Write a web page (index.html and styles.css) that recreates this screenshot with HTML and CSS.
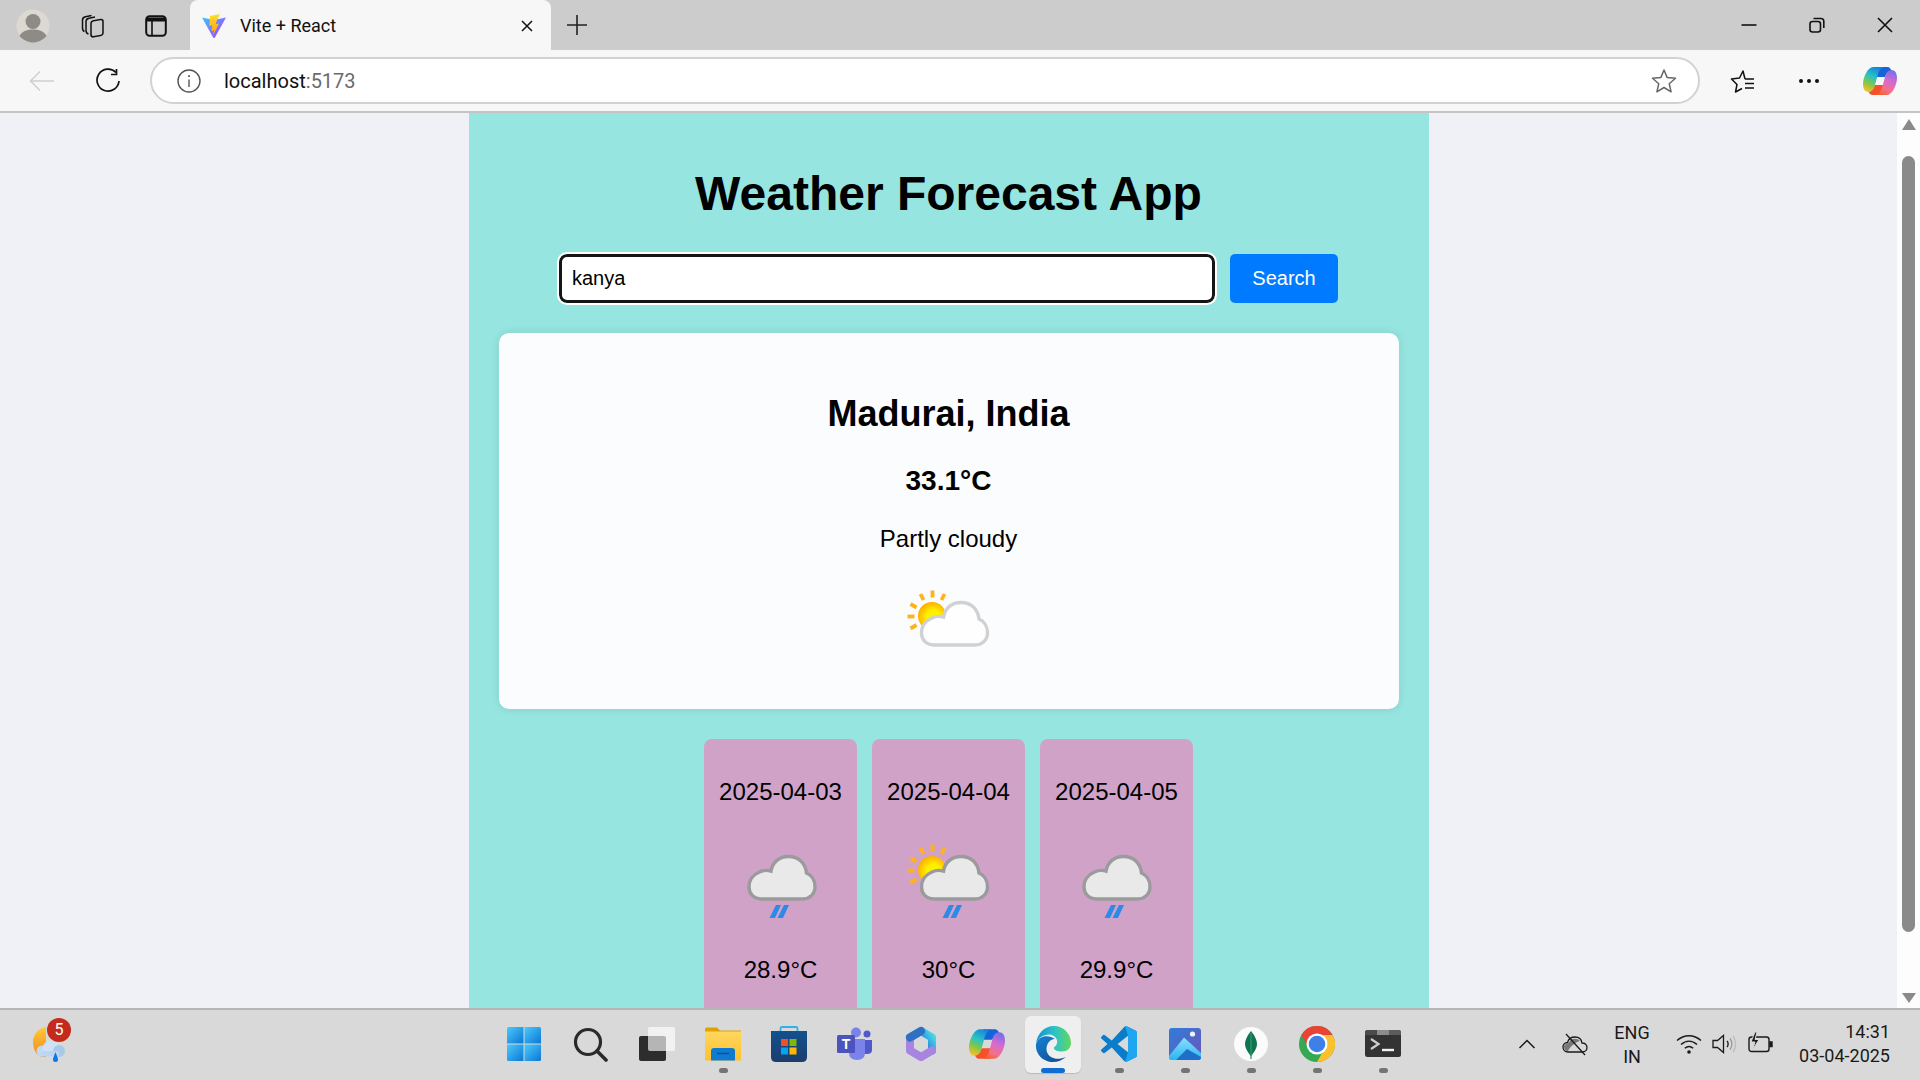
FILE: index.html
```html
<!DOCTYPE html>
<html lang="en">
<head>
    <meta charset="UTF-8">
    <meta name="viewport" content="width=device-width, initial-scale=1.0">
    <title>Vite + React</title>
    <link rel="stylesheet" href="styles.css">
</head>
<body>
    <svg class="svg-defs" aria-hidden="true">
        <defs>
            <radialGradient id="sunFill" cx="0.55" cy="0.55" r="0.55">
                <stop offset="0.45" stop-color="#fff000"/>
                <stop offset="1" stop-color="#ffb000"/>
            </radialGradient>
            <symbol id="sunRays" viewBox="0 0 100 100">
                <circle cx="33" cy="40" r="14" fill="url(#sunFill)"/>
                <g stroke="#ffb21a" stroke-width="3.800" fill="none">
                    <path d="M33.500 14.500V21.500"/>
                    <path d="M21.500 18L24.500 24"/>
                    <path d="M45.500 18L42.500 24"/>
                    <path d="M11.500 28L17.500 31.500"/>
                    <path d="M8.500 40.500H15.500"/>
                    <path d="M11.500 52.500L17.500 49"/>
                </g>
            </symbol>
            <symbol id="cloudShape" viewBox="0 0 100 100">
                <path d="M35 69C27 69 22.500 63.500 22.500 57C22.500 50 27 44.500 33 42C37 40 41 40 44.500 41C46 32 53 26.500 62 26.500C72 26.500 79 33 80 43C85 45 88.500 50.500 88.500 57C88.500 64 83 69 76 69Z" stroke-width="3.400"/>
            </symbol>
            <symbol id="rainDrops" viewBox="0 0 100 100">
                <path d="M45 75H50L44 88H38.500Z" fill="#2b8be6"/>
                <path d="M53 75H58L52 88H46.500Z" fill="#2b8be6"/>
            </symbol>
            <linearGradient id="viteBody" x1="0" y1="0" x2="1" y2="1">
                <stop offset="0" stop-color="#35c8ff"/>
                <stop offset="1" stop-color="#b82cff"/>
            </linearGradient>
            <linearGradient id="viteBolt" x1="0" y1="0" x2="0" y2="1">
                <stop offset="0" stop-color="#ffdd35"/>
                <stop offset="1" stop-color="#ff9d00"/>
            </linearGradient>
            <linearGradient id="copilotLeft" x1="0.6" y1="0" x2="0.2" y2="1">
                <stop offset="0" stop-color="#1684e0"/>
                <stop offset="0.4" stop-color="#2bc4c0"/>
                <stop offset="0.7" stop-color="#8cc63f"/>
                <stop offset="1" stop-color="#fbc02d"/>
            </linearGradient>
            <linearGradient id="copilotRight" x1="0.7" y1="0" x2="0.3" y2="1">
                <stop offset="0" stop-color="#7a6ee8"/>
                <stop offset="0.4" stop-color="#d66ad0"/>
                <stop offset="0.75" stop-color="#f4708a"/>
                <stop offset="1" stop-color="#f5602f"/>
            </linearGradient>
            <symbol id="copilotMark" viewBox="0 0 34 34">
                <path d="M14 3H24C27 3 28 5 29 8L30 12C28 9 26 8 24 9L22 13H14Z" fill="#1565d8"/>
                <path d="M20 31H10C7 31 6 29 5 26L4 22C6 25 8 26 10 25L12 21H20Z" fill="#f5502b"/>
                <path d="M10 3C5 3 0 13 0 20C0 25 2 28 5.500 28C9 28 11 25 12 21L15 10C16 7 18 3 22 3Z" fill="url(#copilotLeft)"/>
                <path d="M24 31C29 31 34 21 34 14C34 9 32 6 28.500 6C25 6 23 9 22 13L19 24C18 27 16 31 12 31Z" fill="url(#copilotRight)"/>
            </symbol>
            <linearGradient id="winFill" x1="0" y1="0" x2="1" y2="1">
                <stop offset="0" stop-color="#4cc8fb"/>
                <stop offset="1" stop-color="#0a78d6"/>
            </linearGradient>
            <linearGradient id="folderFill" x1="0" y1="0" x2="0" y2="1">
                <stop offset="0" stop-color="#ffd75e"/>
                <stop offset="1" stop-color="#fcc02e"/>
            </linearGradient>
            <linearGradient id="edgeTop" x1="0" y1="0.5" x2="1" y2="0.5">
                <stop offset="0" stop-color="#1191d3"/>
                <stop offset="0.55" stop-color="#2fc3c4"/>
                <stop offset="1" stop-color="#62d75f"/>
            </linearGradient>
            <linearGradient id="edgeBody" x1="0" y1="0" x2="0.8" y2="1">
                <stop offset="0" stop-color="#1583d4"/>
                <stop offset="1" stop-color="#0f4f95"/>
            </linearGradient>
            <linearGradient id="photosFill" x1="0" y1="0" x2="1" y2="1">
                <stop offset="0" stop-color="#2f7ddb"/>
                <stop offset="1" stop-color="#6d55b8"/>
            </linearGradient>
            <linearGradient id="photosHill" x1="0" y1="0" x2="0" y2="1">
                <stop offset="0" stop-color="#8fdcff"/>
                <stop offset="1" stop-color="#29b6f0"/>
            </linearGradient>
            <linearGradient id="m365Top" x1="0" y1="0.8" x2="1" y2="0.2">
                <stop offset="0" stop-color="#1f62b8"/>
                <stop offset="0.6" stop-color="#2f8fdc"/>
                <stop offset="1" stop-color="#45d3e8"/>
            </linearGradient>
            <linearGradient id="storeFill" x1="0" y1="0" x2="0" y2="1">
                <stop offset="0" stop-color="#13508f"/>
                <stop offset="1" stop-color="#1c3d6e"/>
            </linearGradient>
            <linearGradient id="weatherSun" x1="0" y1="0" x2="0" y2="1">
                <stop offset="0" stop-color="#ffc93a"/>
                <stop offset="1" stop-color="#f08a1d"/>
            </linearGradient>
        </defs>
    </svg>

    <div class="screen">
        <div class="tabstrip">
            <div class="strip-btn profile-btn">
                <svg class="icon-34" viewBox="0 0 34 34">
                    <circle cx="17" cy="17" r="16.500" fill="#dcd9d3"/>
                    <circle cx="17" cy="12.500" r="7.500" fill="#8e8a85"/>
                    <path d="M3.500 27C6 22 11 20.500 17 20.500S28 22 30.500 27C27 31 22 33.500 17 33.500S7 31 3.500 27Z" fill="#8e8a85"/>
                </svg>
            </div>
            <div class="strip-btn collections-btn">
                <svg class="icon-24" viewBox="0 0 24 24" fill="none" stroke="#111" stroke-width="1.500">
                    <rect x="10" y="7" width="12" height="16" rx="2.500" transform="skewY(-10) translate(0 2)"/>
                    <path d="M7.500 20C5.500 19.500 5 18 5 16.500V7.500C5 5.500 6.500 4.500 8 4.200L14 3"/>
                    <path d="M3.500 17.500C2 17 1.500 15.500 1.500 14V6C1.500 4 3 3 4.500 2.700L10.500 1.500"/>
                </svg>
            </div>
            <div class="strip-btn actions-btn">
                <svg class="icon-22" viewBox="0 0 22 22" fill="none" stroke="#111">
                    <rect x="1.200" y="1.200" width="19.600" height="19.600" rx="3.500" stroke-width="2"/>
                    <path d="M1.500 2.500H20.500V6.500H1.500Z" fill="#111" stroke="none"/>
                    <path d="M7 6V20" stroke-width="1.600"/>
                </svg>
            </div>
            <div class="tab">
                <svg class="icon-24" viewBox="0 0 24 24">
                    <path d="M0 3.500L11.800 6L24 3.500L13 23.300Q12 24.800 11 23.300Z" fill="url(#viteBody)"/>
                    <path d="M18 0L8 2L7.300 12L10.300 11.300L9.300 17L12 16.200L10.800 22L17 9.500L13.600 10.300L15 6Z" fill="url(#viteBolt)"/>
                </svg>
                <span class="tab-title">Vite + React</span>
                <svg class="tab-close icon-12" viewBox="0 0 12 12" fill="none" stroke="#111" stroke-width="1.500">
                    <path d="M1 1L11 11M11 1L1 11"/>
                </svg>
            </div>
            <div class="strip-btn new-tab-btn">
                <svg class="icon-20" viewBox="0 0 20 20" fill="none" stroke="#222" stroke-width="1.600">
                    <path d="M10 0V20M0 10H20"/>
                </svg>
            </div>
            <div class="window-controls">
                <div class="window-btn">
                    <svg class="icon-16" viewBox="0 0 16 16" fill="none" stroke="#111" stroke-width="1.600">
                        <path d="M0.500 8H15.500"/>
                    </svg>
                </div>
                <div class="window-btn">
                    <svg class="icon-16" viewBox="0 0 16 16" fill="none" stroke="#111" stroke-width="1.600">
                        <rect x="1" y="4.500" width="10.500" height="10.500" rx="2.500"/>
                        <path d="M4.500 1.500H12C13.500 1.500 14.800 2.800 14.800 4.300V11"/>
                    </svg>
                </div>
                <div class="window-btn">
                    <svg class="icon-16" viewBox="0 0 16 16" fill="none" stroke="#111" stroke-width="1.600">
                        <path d="M1 1L15 15M15 1L1 15"/>
                    </svg>
                </div>
            </div>
        </div>

        <div class="toolbar">
            <div class="nav-btn back-btn">
                <svg class="icon-26" viewBox="0 0 26 26" fill="none" stroke="#cfcfcf" stroke-width="1.500">
                    <path d="M25 13H1.500M11 3.500L1.500 13L11 22.500"/>
                </svg>
            </div>
            <div class="nav-btn reload-btn">
                <svg class="icon-26" viewBox="0 0 26 26" fill="none" stroke="#111" stroke-width="1.700">
                    <path d="M21 4.500A11 11 0 1 0 24 13"/>
                    <path d="M21.500 1V6.500H16"/>
                </svg>
            </div>
            <div class="address-bar">
                <svg class="icon-24" viewBox="0 0 24 24" fill="none" stroke="#555" stroke-width="1.400">
                    <circle cx="12" cy="12" r="11"/>
                    <path d="M12 10.500V18"/>
                    <path d="M12 6.300V8" stroke-width="1.800"/>
                </svg>
                <span class="address-text">localhost<span class="address-port">:5173</span></span>
                <svg class="address-star icon-26" viewBox="0 0 26 26" fill="none" stroke="#666" stroke-width="1.500" stroke-linejoin="round">
                    <path d="M13 2L16.200 9.600L24.500 10.300L18.200 15.700L20.100 23.800L13 19.500L5.900 23.800L7.800 15.700L1.500 10.300L9.800 9.600Z"/>
                </svg>
            </div>
            <div class="nav-btn favorites-btn">
                <svg class="icon-26" viewBox="0 0 26 26" fill="none" stroke="#111" stroke-width="1.500" stroke-linejoin="round">
                    <path d="M15 11L13 3L9.500 10L1.500 11L7 16.500L5.500 24L12 20.500"/>
                    <path d="M15 11H24M15 15.500H24M15 20H24" stroke-width="1.300"/>
                </svg>
            </div>
            <div class="nav-btn more-btn">
                <span class="dot"></span><span class="dot"></span><span class="dot"></span>
            </div>
            <div class="nav-btn copilot-btn">
                <svg class="icon-34"><use href="#copilotMark"/></svg>
            </div>
        </div>

        <div class="viewport">
            <div class="page">
                <div class="app">
                    <h1 class="app-title">Weather Forecast App</h1>
                    <div class="search-row">
                        <input class="search-input" type="text" value="kanya">
                        <button class="search-btn">Search</button>
                    </div>
                    <div class="current-card">
                        <h2 class="city-name">Madurai, India</h2>
                        <p class="current-temp">33.1°C</p>
                        <p class="current-text">Partly cloudy</p>
                        <svg class="weather-icon" viewBox="0 0 100 100">
                            <use href="#sunRays"/>
                            <use class="cloud-light" href="#cloudShape"/>
                        </svg>
                    </div>
                    <div class="forecast-row">
                        <div class="forecast-card">
                            <p class="forecast-date">2025-04-03</p>
                            <svg class="weather-icon" viewBox="0 0 100 100">
                                <use class="cloud-dim" href="#cloudShape" x="-4.500"/>
                                <use href="#rainDrops"/>
                            </svg>
                            <p class="forecast-temp">28.9°C</p>
                        </div>
                        <div class="forecast-card">
                            <p class="forecast-date">2025-04-04</p>
                            <svg class="weather-icon" viewBox="0 0 100 100">
                                <use href="#sunRays"/>
                                <use class="cloud-dim" href="#cloudShape"/>
                                <use href="#rainDrops" x="5"/>
                            </svg>
                            <p class="forecast-temp">30°C</p>
                        </div>
                        <div class="forecast-card">
                            <p class="forecast-date">2025-04-05</p>
                            <svg class="weather-icon" viewBox="0 0 100 100">
                                <use class="cloud-dim" href="#cloudShape" x="-5.500"/>
                                <use href="#rainDrops" x="-1"/>
                            </svg>
                            <p class="forecast-temp">29.9°C</p>
                        </div>
                    </div>
                </div>
            </div>
            <div class="scrollbar">
                <span class="arrow-up"></span>
                <span class="scroll-thumb"></span>
                <span class="arrow-down"></span>
            </div>
        </div>

        <div class="taskbar">
            <div class="task-left">
                <div class="weather-widget">
                    <svg class="icon-36" viewBox="0 0 36 36">
                        <path d="M15 1A15 15 0 0 0 2 16C2 24 6 30 12 31H15Z" fill="url(#weatherSun)"/>
                        <circle cx="11" cy="25" r="5.500" fill="#c3d9f1"/>
                        <circle cx="20" cy="23" r="8.500" fill="#cfe1f5"/>
                        <circle cx="28" cy="25" r="6" fill="#a9c8ea"/>
                        <path d="M11 25H28V30.500H11Z" fill="#bcd5f0"/>
                        <path d="M24.500 26C26 30 27 32 27 33.500A2.500 2.500 0 0 1 22 33.500C22 32 23 30 24.500 26Z" fill="#0f78e8"/>
                    </svg>
                    <span class="weather-badge">5</span>
                </div>
            </div>
            <div class="task-icons">
                <div class="task-item task-item-first">
                    <div class="task-tile">
                        <svg class="icon-36" viewBox="0 0 36 36" fill="url(#winFill)">
                            <path d="M1 2.500Q1 1 2.500 1H17.500V17.500H1Z"/>
                            <path d="M18.500 1H33.500Q35 1 35 2.500V17.500H18.500Z"/>
                            <path d="M1 18.500H17.500V35H2.500Q1 35 1 33.500Z"/>
                            <path d="M18.500 18.500H35V33.500Q35 35 33.500 35H18.500Z"/>
                        </svg>
                    </div>
                </div>
                <div class="task-item">
                    <div class="task-tile">
                        <svg class="icon-36" viewBox="0 0 36 36" fill="none" stroke="#2a2a2a">
                            <circle cx="15" cy="16" r="12.500" stroke-width="3.200"/>
                            <path d="M24 25L33 34" stroke-width="3.600" stroke-linecap="round"/>
                        </svg>
                    </div>
                </div>
                <div class="task-item">
                    <div class="task-tile">
                        <svg class="icon-36" viewBox="0 0 36 36">
                            <rect x="0" y="10" width="27" height="25" rx="2" fill="#2d2d2d"/>
                            <rect x="9" y="1" width="27" height="24" rx="2" fill="#ffffff" fill-opacity="0.65"/>
                        </svg>
                    </div>
                </div>
                <div class="task-item">
                    <div class="task-tile">
                        <svg class="icon-36" viewBox="0 0 36 36">
                            <path d="M0 3Q0 1.500 1.500 1.500H12L15 4.500H36V10H0Z" fill="#dfa200"/>
                            <rect x="0" y="5.500" width="36" height="29" fill="url(#folderFill)"/>
                            <path d="M6 34.500V25Q6 22 9 22H27Q30 22 30 25V34.500Z" fill="#0f7bd0"/>
                            <path d="M12 27.500H24" stroke="#0a4f94" stroke-width="1.400"/>
                        </svg>
                        <span class="task-mark"></span>
                    </div>
                </div>
                <div class="task-item">
                    <div class="task-tile">
                        <svg class="icon-36" viewBox="0 0 36 36">
                            <path d="M9.500 7V2.500Q9.500 1 11 1H25Q26.500 1 26.500 2.500V7" fill="none" stroke="#2bb4ec" stroke-width="1.800"/>
                            <path d="M0 5H36V31Q36 36 31 36H5Q0 36 0 31Z" fill="url(#storeFill)"/>
                            <rect x="10" y="13" width="7" height="7" fill="#f25022"/>
                            <rect x="18.500" y="13" width="7" height="7" fill="#7fba00"/>
                            <rect x="10" y="21.500" width="7" height="7" fill="#00a4ef"/>
                            <rect x="18.500" y="21.500" width="7" height="7" fill="#ffb900"/>
                        </svg>
                    </div>
                </div>
                <div class="task-item">
                    <div class="task-tile">
                        <svg class="icon-36" viewBox="0 0 36 36">
                            <circle cx="19" cy="6.500" r="5" fill="#7b83eb"/>
                            <circle cx="30" cy="8" r="3.500" fill="#5059c9"/>
                            <path d="M26 14H35V24Q35 28 30 28H26Z" fill="#5059c9"/>
                            <path d="M12 13H28V27Q28 34 20 34Q12 34 12 27Z" fill="#7b83eb"/>
                            <rect x="0" y="9" width="18" height="18" rx="1.500" fill="#4b53bc"/>
                            <text class="teams-letter" x="9" y="23">T</text>
                        </svg>
                    </div>
                </div>
                <div class="task-item">
                    <div class="task-tile">
                        <svg class="icon-36" viewBox="0 0 36 36" fill="none" stroke-width="8" stroke-linejoin="round" stroke-linecap="round">
                            <path d="M7 11.500L18 5L29 11.500V24.500" stroke="url(#m365Top)"/>
                            <path d="M29 24.500L18 31L7 24.500V11.500" stroke="#a884e0"/>
                            <path d="M7 11.500L18 5" stroke="#2f6fc4"/>
                        </svg>
                    </div>
                </div>
                <div class="task-item">
                    <div class="task-tile">
                        <svg class="icon-36"><use href="#copilotMark"/></svg>
                    </div>
                </div>
                <div class="task-item">
                    <div class="task-tile task-tile-active">
                        <svg class="icon-36" viewBox="0 0 36 36">
                            <path d="M1 18C0 28 8 36 18 36C23 36 27 34 31 31C26 33 21 33.500 17 31.500C12 29 10.500 24 12 19.500C13.500 15 17 13 20 13C15 9 4 8 1 18Z" fill="url(#edgeBody)"/>
                            <path d="M1 18C2 8 9 0 19 0C29 0 36 8 36 17C36 22 32 25.500 27 25.500C22 25.500 19 24 19 22C19 21 20 20.500 21 19.500C22 18 22.500 16 22 14C21 11 18 8.500 14 8.500C8 8.500 3 12 1 18Z" fill="url(#edgeTop)"/>
                        </svg>
                        <span class="task-mark task-mark-active"></span>
                    </div>
                </div>
                <div class="task-item">
                    <div class="task-tile">
                        <svg class="icon-36" viewBox="0 0 100 100">
                            <path fill-rule="evenodd" d="M71 99L97 87Q100 85 100 81V19Q100 15 97 13L71 1Q68 0 65 2L30 40L10 25Q8 24 6 25L1 30Q-1 32 1 35L18 50L1 65Q-1 68 1 70L6 75Q8 76 10 75L30 60L65 98Q68 100 71 99ZM75 27L46 50L75 73Z" fill="#0b7cc9"/>
                            <path d="M71 99L97 87Q100 85 100 81V19Q100 15 97 13L71 1Q68 0 67 1L75 27V73L67 99Q68 100 71 99Z" fill="#1fa6f0"/>
                        </svg>
                        <span class="task-mark"></span>
                    </div>
                </div>
                <div class="task-item">
                    <div class="task-tile">
                        <svg class="icon-36" viewBox="0 0 36 36">
                            <rect x="2" y="2" width="32" height="32" rx="3" fill="url(#photosFill)"/>
                            <circle cx="25.500" cy="8" r="2.600" fill="#f3f3f8"/>
                            <path d="M2 31V30L17 11.500L34 27V31Q34 34 31 34H5Q2 34 2 31Z" fill="url(#photosHill)"/>
                            <path d="M9 34L20 23L34 31Q34 34 31 34Z" fill="#1f6fc9"/>
                        </svg>
                        <span class="task-mark"></span>
                    </div>
                </div>
                <div class="task-item">
                    <div class="task-tile">
                        <svg class="icon-36" viewBox="0 0 36 36">
                            <circle cx="18" cy="18" r="17" fill="#fbfbfb"/>
                            <path d="M18 5C22 10 24 14 24 18C24 23 20 27 18.500 30V33H17.500V30C16 27 12 23 12 18C12 14 14 10 18 5Z" fill="#0f7550"/>
                            <path d="M18 7V30" stroke="#4dab72" stroke-width="0.800"/>
                        </svg>
                        <span class="task-mark"></span>
                    </div>
                </div>
                <div class="task-item">
                    <div class="task-tile">
                        <svg class="icon-36" viewBox="0 0 36 36">
                            <circle cx="18" cy="18" r="18" fill="#34a853"/>
                            <path d="M18 9H33.590A18 18 0 0 0 2.410 9L10.200 22.500A9 9 0 0 1 18 9Z" fill="#ea4335"/>
                            <path d="M25.790 22.500L18 36A18 18 0 0 0 33.590 9H18A9 9 0 0 1 25.790 22.500Z" fill="#fbc02d"/>
                            <circle cx="18" cy="18" r="10.500" fill="#ffffff"/>
                            <circle cx="18" cy="18" r="8.300" fill="#3f7fe8"/>
                        </svg>
                        <span class="task-mark"></span>
                    </div>
                </div>
                <div class="task-item">
                    <div class="task-tile">
                        <svg class="icon-36" viewBox="0 0 36 36">
                            <rect x="0" y="4" width="36" height="27" rx="2.500" fill="#333333"/>
                            <path d="M0 6.500Q0 4 2.500 4H12V9H0Z" fill="#4a4a4a"/>
                            <rect x="12" y="4" width="12" height="5" fill="#8c8c8c"/>
                            <path d="M24 4H33.500Q36 4 36 6.500V9H24Z" fill="#5c5c5c"/>
                            <path d="M6 13L13.500 18L6 23" fill="none" stroke="#cfcfcf" stroke-width="2.200"/>
                            <path d="M17 24H29" stroke="#f2f2f2" stroke-width="2.400"/>
                        </svg>
                        <span class="task-mark"></span>
                    </div>
                </div>
            </div>
            <div class="tray">
                <div class="tray-item tray-chevron">
                    <svg class="icon-18" viewBox="0 0 18 18" fill="none" stroke="#1a1a1a" stroke-width="1.500">
                        <path d="M1.500 13L9 5.500L16.500 13"/>
                    </svg>
                </div>
                <div class="tray-item tray-cloud">
                    <svg class="icon-26" viewBox="0 0 26 26" stroke="#1a1a1a" stroke-width="1.300">
                        <path d="M6 21C3 21 1 19 1 16C1 13.500 3 11.500 5.500 11.500C6.500 8 9.500 6 13 6C17 6 19.500 8.500 20 12C23 12 25 14 25 16.500C25 19 23 21 20 21Z" fill="none"/>
                        <path d="M2 15C4 12 7 12 8 10C9.500 7.500 15 6.500 18 10C12 12 8 16 6 20C3 20 2 18 2 15Z" fill="#777" stroke="none"/>
                        <path d="M4 3L23 24" fill="none"/>
                    </svg>
                </div>
                <div class="tray-item tray-lang">
                    <span>ENG</span>
                    <span>IN</span>
                </div>
                <div class="tray-item tray-icon">
                    <svg class="icon-26" viewBox="0 0 26 26" fill="none" stroke="#1a1a1a" stroke-width="1.500">
                        <path d="M1 9.500C8 3 18 3 25 9.500"/>
                        <path d="M5 13.500C10 9 16 9 21 13.500"/>
                        <path d="M8.800 17.300C11.500 15 14.500 15 17.200 17.300"/>
                        <circle cx="13" cy="21" r="1.800" fill="#1a1a1a" stroke="none"/>
                    </svg>
                </div>
                <div class="tray-item tray-icon">
                    <svg class="icon-26" viewBox="0 0 26 26" fill="none" stroke="#1a1a1a" stroke-width="1.300">
                        <path d="M1 9.500H5.500L11.500 4.500V21.500L5.500 16.500H1Z"/>
                        <path d="M15 10C16.500 11.500 16.500 14.500 15 16"/>
                        <path d="M18 7.500C20.500 10.500 20.500 15.500 18 18.500" stroke="#9a9a9a"/>
                        <path d="M21 5C24.500 9.500 24.500 16.500 21 21" stroke="#bdbdbd"/>
                    </svg>
                </div>
                <div class="tray-item tray-icon">
                    <svg class="icon-26" viewBox="0 0 26 26" fill="none" stroke="#1a1a1a" stroke-width="1.400">
                        <rect x="1" y="6" width="20" height="14.500" rx="2.500"/>
                        <path d="M22 11H24V15.500H22Z" fill="#1a1a1a"/>
                        <path d="M7 1L3 11H7L4.500 19L11 8.500H7L9 1Z" fill="#1a1a1a" stroke="#d9d9d9" stroke-width="1"/>
                    </svg>
                </div>
                <div class="tray-clock">
                    <span>14:31</span>
                    <span>03-04-2025</span>
                </div>
            </div>
        </div>
    </div>
</body>
</html>
```

FILE: styles.css
```css
* {
    box-sizing: border-box;
}

body {
    margin: 0;
    font-family: "Liberation Sans", Arial, sans-serif;
    color: #000;
}

.svg-defs {
    position: absolute;
    width: 0;
    height: 0;
}

.icon-12 { width: 12px; height: 12px; }
.icon-16 { width: 16px; height: 16px; }
.icon-18 { width: 18px; height: 18px; }
.icon-20 { width: 20px; height: 20px; }
.icon-22 { width: 22px; height: 22px; }
.icon-24 { width: 24px; height: 24px; }
.icon-26 { width: 26px; height: 26px; }
.icon-34 { width: 34px; height: 34px; }
.icon-36 { width: 36px; height: 36px; }

.screen {
    display: flex;
    flex-direction: column;
    width: 1920px;
    height: 1080px;
    overflow: hidden;
}

/* browser tab strip */
.tabstrip {
    display: flex;
    align-items: center;
    flex: none;
    height: 50px;
    background-color: #cccccc;
}

.strip-btn {
    display: flex;
    align-items: center;
    justify-content: center;
    height: 50px;
    padding-top: 2px;
}

.profile-btn { width: 66px; }
.collections-btn { width: 54px; }
.actions-btn { width: 72px; margin-right: -2px; }
.new-tab-btn { width: 52px; padding-top: 0; }

.tab {
    display: flex;
    align-items: center;
    width: 361px;
    height: 50px;
    padding: 1px 18px 0 12px;
    background-color: #f7f7f7;
    border-radius: 8px 8px 0 0;
}

.tab-title {
    margin-left: 14px;
    font-family: Roboto, sans-serif;
    font-size: 18px;
    color: #111;
}

.tab-close {
    margin-left: auto;
}

.window-controls {
    display: flex;
    margin-left: auto;
    padding-right: 1px;
}

.window-btn {
    display: flex;
    align-items: center;
    justify-content: center;
    width: 68px;
    height: 50px;
}

/* address bar row */
.toolbar {
    display: flex;
    align-items: center;
    flex: none;
    height: 63px;
    padding-left: 8px;
    background-color: #f7f7f7;
    border-bottom: 2px solid #c4c4c4;
}

.nav-btn {
    display: flex;
    align-items: center;
    justify-content: center;
    width: 66px;
    height: 47px;
}

.back-btn { width: 67px; }
.favorites-btn { margin-left: 10px; }
.copilot-btn { width: 76px; }

.more-btn {
    gap: 4px;
}

.dot {
    width: 4px;
    height: 4px;
    background-color: #111;
    border-radius: 50%;
}

.address-bar {
    display: flex;
    align-items: center;
    width: 1550px;
    height: 47px;
    margin-left: 9px;
    padding: 0 21px 0 25px;
    background-color: #fff;
    border: 2px solid #d2d2d2;
    border-radius: 24px;
}

.address-text {
    margin-left: 23px;
    font-family: Roboto, sans-serif;
    font-size: 20px;
    color: #111;
}

.address-port {
    color: #6b6b6b;
}

.address-star {
    margin-left: auto;
}

/* page area */
.viewport {
    display: flex;
    flex: 1;
    min-height: 0;
}

.page {
    flex: 1;
    overflow: hidden;
    background-color: #f0f1f6;
}

.app {
    width: 960px;
    height: 1000px;
    margin: 0 auto;
    padding: 20px 30px;
    background-color: #96e5e0;
}

.app-title {
    margin: 33px 0;
    font-size: 48px;
    line-height: 55px;
    text-align: center;
}

.search-row {
    display: flex;
    justify-content: center;
    gap: 15px;
    margin-bottom: 30px;
}

.search-input {
    width: 656px;
    height: 49px;
    padding: 0 10px;
    font-family: inherit;
    font-size: 20px;
    color: #000;
    background-color: #fff;
    border: 3px solid #151515;
    border-radius: 8px;
    outline: 2px solid #fff;
}

.search-btn {
    width: 108px;
    height: 49px;
    padding: 0;
    font-family: inherit;
    font-size: 20px;
    color: #fff;
    background-color: #007bff;
    border: none;
    border-radius: 5px;
    cursor: pointer;
}

.current-card {
    height: 376px;
    padding: 30px;
    text-align: center;
    background-color: #fbfcfe;
    border-radius: 10px;
    box-shadow: 0 0 10px rgba(0, 0, 0, 0.1);
}

.city-name {
    margin: 30px 0 31px;
    font-size: 36px;
    line-height: 41px;
}

.current-temp {
    margin: 31px 0 28px;
    font-size: 28px;
    font-weight: bold;
    line-height: 32px;
}

.current-text {
    margin: 28px 0 23px;
    font-size: 24px;
    line-height: 28px;
}

.weather-icon {
    display: block;
    width: 100px;
    height: 100px;
    margin: 0 auto;
}

.cloud-light {
    fill: #fefefe;
    stroke: #d0d1d3;
}

.cloud-dim {
    fill: #e9e9ea;
    stroke: #9b9a9c;
}

.forecast-row {
    display: flex;
    justify-content: center;
    gap: 15px;
    margin-top: 30px;
}

.forecast-card {
    width: 153px;
    padding: 15px;
    text-align: center;
    background-color: #d0a2c8;
    border-radius: 8px;
}

.forecast-date,
.forecast-temp {
    margin: 24px 0;
    font-size: 24px;
    line-height: 28px;
    white-space: nowrap;
}

.forecast-temp {
    margin-top: 26px;
}

/* scrollbar */
.scrollbar {
    display: flex;
    flex-direction: column;
    align-items: center;
    flex: none;
    width: 23px;
    padding-top: 6px;
    background-color: #fdfdfd;
}

.arrow-up,
.arrow-down {
    width: 0;
    height: 0;
    border-left: 7px solid transparent;
    border-right: 7px solid transparent;
}

.arrow-up {
    border-bottom: 11px solid #8a8a8a;
}

.arrow-down {
    border-top: 10px solid #8a8a8a;
}

.scroll-thumb {
    width: 13px;
    height: 776px;
    margin: 26px 0 61px;
    background-color: #8a8a8a;
    border-radius: 7px;
}

/* windows taskbar */
.taskbar {
    display: flex;
    flex: none;
    height: 72px;
    background-color: #d9d9d9;
    border-top: 2px solid #b6b6b6;
}

.task-left {
    flex: none;
    width: 490px;
    padding: 16px 0 0 31px;
}

.weather-widget {
    position: relative;
    width: 36px;
    height: 36px;
}

.weather-badge {
    position: absolute;
    top: -8px;
    left: 16px;
    width: 24px;
    height: 24px;
    font-family: Roboto, sans-serif;
    font-size: 16px;
    line-height: 24px;
    text-align: center;
    color: #fff;
    background-color: #c42b1c;
    border-radius: 50%;
}

.task-icons {
    display: flex;
    flex: none;
}

.task-item {
    display: flex;
    justify-content: center;
    width: 66px;
}

.task-item-first {
    width: 68px;
}

.task-tile {
    display: flex;
    flex-direction: column;
    align-items: center;
    width: 56px;
    height: 57px;
    margin-top: 6px;
    padding-top: 10px;
    border-radius: 6px;
}

.task-tile-active {
    background-color: #efefef;
    box-shadow: 0 1px 1px rgba(0, 0, 0, 0.15);
}

.task-mark {
    width: 9px;
    height: 5px;
    margin-top: 6px;
    background-color: #747474;
    border-radius: 3px;
}

.task-mark-active {
    width: 24px;
    background-color: #0f6cd0;
}

.teams-letter {
    font-family: "Liberation Sans", sans-serif;
    font-size: 14px;
    font-weight: bold;
    text-anchor: middle;
    fill: #fff;
}

.tray {
    display: flex;
    flex: 1;
    padding-left: 87px;
    color: #1a1a1a;
    font-family: Roboto, sans-serif;
    font-size: 18px;
}

.tray-item {
    display: flex;
    align-items: center;
    justify-content: center;
    height: 68px;
}

.tray-chevron { width: 48px; }
.tray-cloud { width: 48px; }

.tray-lang {
    flex-direction: column;
    gap: 3px;
    width: 66px;
    margin-right: 6px;
}

.tray-icon { width: 36px; }

.tray-clock {
    display: flex;
    flex-direction: column;
    align-items: flex-end;
    justify-content: center;
    gap: 3px;
    height: 68px;
    margin-left: auto;
    padding: 0 30px 2px 0;
}
```
